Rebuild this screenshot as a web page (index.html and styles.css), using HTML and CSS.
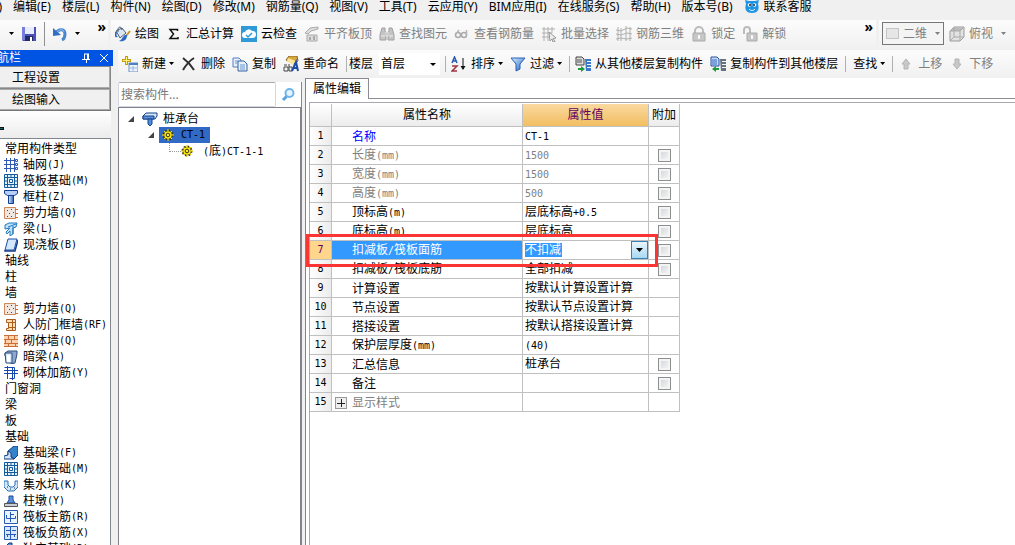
FILE: index.html
```html
<!DOCTYPE html>
<html lang="zh-CN">
<head>
<meta charset="utf-8">
<title>构件属性编辑</title>
<link rel="stylesheet" href="styles.css">
</head>
<body>
<svg class="sprite" aria-hidden="true">
  <defs>
    <linearGradient id="gBlue" x1="0" y1="0" x2="1" y2="1"><stop offset="0" stop-color="#d8ecff"/><stop offset="1" stop-color="#1f62c4"/></linearGradient>
    <linearGradient id="gDeep" x1="0" y1="0" x2="1" y2="0"><stop offset="0" stop-color="#d9ecfb"/><stop offset="1" stop-color="#2c64b8"/></linearGradient>
  </defs>
  <symbol id="save" viewBox="0 0 16 16"><path d="M1 1h14v14H2l-1-1z" fill="#4a50b8"/><path d="M4 1h9v7H4z" fill="#e8ecfa"/><path d="M1 1h3v13H1z" fill="#7780d8"/><path d="M4 10h8v5H4z" fill="#222a68"/><path d="M9 11h2v4H9z" fill="#fff"/></symbol>
  <symbol id="undo" viewBox="0 0 16 16"><path d="M4 7c3-5 9-4 9 1 0 3-1 5-3 6" fill="none" stroke="#4a86d0" stroke-width="3"/><path d="M1 2l0 8 8-1z" fill="#2f6fc4"/><path d="M5 6c3-3 6-3 7 0" fill="none" stroke="#9cc4ee"/></symbol>
  <symbol id="paint" viewBox="0 0 16 16"><path d="M1 5l6-3 4 5-6 5z" fill="#dbe6f2" stroke="#4a6078"/><path d="M3 6C2 1 6-1 7 4" fill="none" stroke="#3d5570"/><path d="M1 6c-1 3 0 5 1 4" fill="none" stroke="#2468c0" stroke-width="2"/><path d="M15 5l-4 5" stroke="#c8942c" stroke-width="2"/><path d="M12 9c0 5-3 7-8 6 3-1 3-4 6-6z" fill="#2868c8"/></symbol>
  <symbol id="sigma" viewBox="0 0 16 16"><path d="M11.500 5V3.500H4L7.500 8 4 12.500h8V11" fill="none" stroke="#111" stroke-width="1.500"/></symbol>
  <symbol id="cloud" viewBox="0 0 16 16"><path d="M0 0h16v16H0z" fill="#2e9bd8"/><path d="M4 12a3 3 0 010-6 4 4 0 017-1 3 3 0 011 7z" fill="#fff"/><path d="M5 9l2 2 4-4" fill="none" stroke="#2e9bd8" stroke-width="1.5"/></symbol>
  <symbol id="align" viewBox="0 0 16 16"><path d="M1 7l5-5 8-1v2l-7 2-3 3zM3 9h10v6H3z" fill="#ddd" stroke="#aaa"/><path d="M5 11h2v3H5zM9 10h2v4H9z" fill="#aaa"/></symbol>
  <symbol id="binoc" viewBox="0 0 16 16"><path d="M3 2h3v3l1 2v7H1V9zM10 2h3l2 7v5H9V7l1-2z" fill="#c4c4c4" stroke="#a0a0a0"/><path d="M7 6h2v4H7zM2 10h4M10 10h4" fill="#aaa" stroke="#eee"/></symbol>
  <symbol id="glasses" viewBox="0 0 16 16"><circle cx="4" cy="9" r="2.500" fill="none" stroke="#aaa" stroke-width="1.500"/><circle cx="10" cy="9" r="2.500" fill="none" stroke="#aaa" stroke-width="1.500"/><path d="M2 8l3-4M12.500 9V4" stroke="#b5b5b5" stroke-width="1.500" fill="none"/></symbol>
  <symbol id="batch" viewBox="0 0 16 16"><path d="M1 3h13M1 7h10M1 11h8M3 1v14M7 1v14M11 1v6" stroke="#b0b0b0" fill="none"/><path d="M8 6l7 6-3 .5 2 3-2 .5-1-3-2 2z" fill="#eee" stroke="#999"/></symbol>
  <symbol id="rebar3d" viewBox="0 0 16 16"><path d="M0 4l5 1 6-3 5 1M0 8l5 1 6-2 5 1M0 13l5-1 6 1 5-1M2 1v14M5 2v13M10 0v15M14 1v14" stroke="#b0b0b0" fill="none"/></symbol>
  <symbol id="lock" viewBox="0 0 16 16"><path d="M4 8V5a4 4 0 018 0v3" fill="none" stroke="#bbb" stroke-width="2"/><path d="M2 7h12v8H2z" fill="#c6c6c6" stroke="#aaa"/><path d="M8 9v4M7 11h2" stroke="#fff" stroke-width="1.5"/></symbol>
  <symbol id="unlock" viewBox="0 0 16 16"><path d="M2 8V4a3 3 0 016 0v4" fill="none" stroke="#bbb" stroke-width="2"/><path d="M5 7h10v8H5z" fill="#c6c6c6" stroke="#aaa"/><path d="M10 9v4M9 11h2" stroke="#fff" stroke-width="1.5"/></symbol>
  <symbol id="cube" viewBox="0 0 16 16"><path d="M1 5l4-4h10v10l-4 4H1z" fill="#e2e2e2" stroke="#999"/><path d="M1 5l4-4h10l-4 4z" fill="#bbb"/><path d="M1 5h10v10M11 5l4-4M5 1v10h10M1 15l4-4" fill="none" stroke="#aaa"/></symbol>
  <symbol id="new" viewBox="0 0 16 16"><path d="M7 7h9v9H7z" fill="#edf3fb" stroke="#6a8fc0"/><path d="M7 7h9v2H7z" fill="#4f80c4"/><path d="M8 12h7M11 10v5" stroke="#9ab4d8"/><path d="M3 0h3v3h3v3H6v3H3V6H0V3h3z" fill="#c79a10"/><path d="M4 1h1v7H4zM1 4h7v1H1z" fill="#fff27a"/></symbol>
  <symbol id="del" viewBox="0 0 16 16"><path d="M2 2c4 3 8 7 11 12M13 2C8 5 5 9 2 14" fill="none" stroke="#303030" stroke-width="2"/></symbol>
  <symbol id="copy" viewBox="0 0 16 16"><path d="M1 2h6l2 2v7H1z" fill="#e6effb" stroke="#5680be"/><path d="M6 5h6l3 3v7H6z" fill="#e6effb" stroke="#34649f"/><path d="M3 5h3M3 7h3M8 9h5M8 11h5M8 13h5" stroke="#6f98d2"/></symbol>
  <symbol id="rename" viewBox="0 0 16 16"><path d="M3 4l3-4h8l1 5-4 3z" fill="#d8a83c" stroke="#86682a"/><path d="M5 2l8 3-3 4-6-4z" fill="#fbe49a"/><path d="M1 11h4v4H1zM1 9h3M6 8v7h3v-4H6" fill="none" stroke="#444"/><path d="M9 15l4-9 2 9M11 12h4" fill="none" stroke="#1c4ea8" stroke-width="2"/></symbol>
  <symbol id="sort" viewBox="0 0 16 16"><path d="M1 7l2.500-6L6 7M2 5h3" fill="none" stroke="#2a5ab0" stroke-width="1.500"/><path d="M1 10h5l-5 5h5" fill="none" stroke="#a03440" stroke-width="1.500"/><path d="M12 2v11" stroke="#111"/><path d="M9.500 10h5L12 14z" fill="#111"/></symbol>
  <symbol id="filter" viewBox="0 0 16 16"><path d="M1 2h14l-5 6v5l-4 2V8z" fill="url(#gBlue)" stroke="#2860b8"/></symbol>
  <symbol id="fromFloor" viewBox="0 0 16 16"><path d="M1 1h6l2 2v6H1z" fill="#ddd" stroke="#444"/><path d="M2 4h5M2 6h5" stroke="#555"/><path d="M3 12h3v-2l4 3-4 3v-2H3z" fill="#1c9a3c"/><path d="M10 3h6v2h-4v1h4v2h-4v1h4v2h-4v1h4v3h-5z" fill="#3a78c8"/></symbol>
  <symbol id="toFloor" viewBox="0 0 16 16"><path d="M1 1h6l2 2v7H1z" fill="#c6dcfa" stroke="#234fa4"/><path d="M2 4h5M2 6h5M2 8h5" stroke="#3564b8"/><path d="M9 12H6v-2l-4 3 4 3v-2h3z" fill="#1c9a3c"/><path d="M10 3h6v2h-4v1h4v2h-4v1h4v2h-4v1h4v3h-5z" fill="#657080"/></symbol>
  <symbol id="up" viewBox="0 0 16 16"><path d="M8 3l4 5h-2v5H6V8H4z" fill="#c8c8c8" stroke="#b4b4b4"/></symbol>
  <symbol id="down" viewBox="0 0 16 16"><path d="M8 13l4-5h-2V3H6v5H4z" fill="#c8c8c8" stroke="#b4b4b4"/></symbol>
  <symbol id="service" viewBox="0 0 16 16"><path d="M1 2l4 1h6l4-1-1 4c2 6-1 9-6 9S0 12 2 6z" fill="#1e96e4"/><circle cx="5.500" cy="7" r="1.800" fill="#fff"/><circle cx="10.500" cy="7" r="1.800" fill="#fff"/><circle cx="6" cy="7" r="1" fill="#123"/><circle cx="10" cy="7" r="1" fill="#123"/><path d="M5 11c2 2 4 2 6 0" stroke="#fff" fill="none"/></symbol>
  <symbol id="search" viewBox="0 0 16 16"><circle cx="9.500" cy="6" r="4" fill="#e8f4fd" stroke="#6cb6ec" stroke-width="2"/><path d="M6.500 9.500L3 13" stroke="#5aa2e0" stroke-width="3"/></symbol>
  <symbol id="pin" viewBox="0 0 10 10"><path d="M3 1h5M3.500 1v5M6.500 1v5M7.500 1v5M1 6.500h8M5.500 7v3" stroke="#fff" fill="none"/></symbol>
  <symbol id="close" viewBox="0 0 10 10"><path d="M1 1l8 8M9 1L1 9" stroke="#fff" fill="none"/></symbol>
  <symbol id="expand" viewBox="0 0 8 8"><path d="M7 1v6H1z" fill="#444"/></symbol>
  <symbol id="gear" viewBox="0 0 12 12"><circle cx="6" cy="6" r="4.500" fill="none" stroke="#3a3400" stroke-width="2" stroke-dasharray="1.800 1.700"/><circle cx="6" cy="6" r="4" fill="#ffe81c" stroke="#6e6400" stroke-width="0.800"/><path d="M6 0v12M0 6h12M2 2l8 8M10 2l-8 8" stroke="#f5e100"/><circle cx="6" cy="6" r="1.800" fill="#ffe81c" stroke="#333"/></symbol>
  <symbol id="cap" viewBox="0 0 16 14"><path d="M1 4l3-3h11v3l-2 3H1z" fill="#d4e8fa" stroke="#16408c"/><path d="M1 4h11v3H1z" fill="#5a94dc" stroke="#16408c"/><path d="M6 7h4v5l-2 2-2-2z" fill="#4c90dc" stroke="#16408c"/></symbol>
  <symbol id="grid" viewBox="0 0 14 14"><path d="M2.500 0v14M6.500 0v14M10.500 0v14M0 2.500h12M0 6.500h12M0 10.500h12" stroke="#3058b4"/><path d="M11.500 1.500h2v2h-2zM11.500 5.500h2v2h-2zM11.500 9.500h2v2h-2z" fill="#fff" stroke="#3058b4"/></symbol>
  <symbol id="raft" viewBox="0 0 14 14"><path d="M.5.5h13v13H.5z" fill="#e2f2ff" stroke="#155b9c"/><path d="M0 3.500h14M0 10.500h14M3.500 0v14M10.500 0v14" stroke="#155b9c"/><path d="M5.500 5.500h3v3h-3z" fill="#fff" stroke="#155b9c"/><path d="M7 1v2M7 11v2M1 7h2M11 7h2" stroke="#155b9c"/></symbol>
  <symbol id="column" viewBox="0 0 14 14"><path d="M.5.500h13v3l-3 2h-7l-3-2z" fill="#b4d0f8" stroke="#143c94"/><path d="M4.500 5.500h5v8h-5z" fill="url(#gDeep)" stroke="#143c94"/></symbol>
  <symbol id="wall" viewBox="0 0 14 14"><path d="M.5 1.500h11v11H.5z" fill="#eee6df" stroke="#d08858"/><path d="M3 4.500h1M7 3.500h1M5 7.500h1M9 6.500h1M3 10.500h1M7 10.500h1" stroke="#4c4c4c"/><path d="M11 3.500h3M11 7.500h3M11 11.500h3" stroke="#d86c1c"/></symbol>
  <symbol id="beam" viewBox="0 0 14 14"><path d="M1 3l4-2h8l-1 4-3 1v6l-3 2V9L3 12l-1-2 4-4-5 1z" fill="#bfe2fb" stroke="#2579bd"/><path d="M4 5l8-3M9 4v8" stroke="#2579bd"/></symbol>
  <symbol id="slab" viewBox="0 0 14 14"><path d="M4 1h9l-3 11H1z" fill="#d2e7fc" stroke="#1c4ea4"/><path d="M1 12v1h10l3-11" fill="none" stroke="#123c88" stroke-width="1.500"/></symbol>
  <symbol id="defwall" viewBox="0 0 14 14"><path d="M2.500 1.500h9v11h-9v-2h2v-6h-2z" fill="#fae1b8" stroke="#ad5c1c"/><path d="M8.500 2v10M5 4.500h6M5 9.500h6" stroke="#ad5c1c"/></symbol>
  <symbol id="brick" viewBox="0 0 14 14"><path d="M0 1h14v12H0z" fill="#fbd3ac"/><path d="M0 1.500h14M0 5.500h14M0 9.500h14M0 12.500h14M4.500 1v4M10.500 1v4M7.500 5v4M1.500 5v4M4.500 9v4M11.500 9v4" stroke="#cc6c38"/></symbol>
  <symbol id="hidbeam" viewBox="0 0 14 14"><path d="M1 3l3-2h9v3l-2 9-4 1V6H1z" fill="#8da8cc" stroke="#2c4c7c"/><path d="M1 3h7v10H2z" fill="#d9e6f6" stroke="#2c4c7c"/><path d="M3 5h3v7H3z" fill="#fff"/></symbol>
  <symbol id="reinf" viewBox="0 0 14 14"><path d="M0 4.500h14M0 7.500h14M3.500 0v13M8.500 2v12M.5 1.500h10v8M5.500 12.500h5v-5" stroke="#1648b0" fill="none"/></symbol>
  <symbol id="fbeam" viewBox="0 0 14 14"><path d="M4 9V5l6-5h4v9l-4 4z" fill="#3484cc" stroke="#123c7c"/><path d="M0 13v-3l4-1V5l3 2v4l3 2z" fill="#cfe6fa" stroke="#123c7c"/></symbol>
  <symbol id="pit" viewBox="0 0 14 14"><path d="M0 3h4v4l2 2h3l2-2V3h3v6l-4 4H4L0 9z" fill="#d0e8fa" stroke="#2a70b8"/><path d="M3 9h1M6 11h1M10 10h1" stroke="#234"/></symbol>
  <symbol id="pier" viewBox="0 0 14 14"><path d="M5 2h4v4l2 3H3l2-3z" fill="#5c90dc" stroke="#1c489c"/><path d="M.5 9.500h13v3H.5z" fill="#c8ccd4" stroke="#555"/></symbol>
  <symbol id="mainbar" viewBox="0 0 14 14"><path d="M.5.500h13v13H.5z" fill="#eaf4ff" stroke="#2858b4"/><path d="M2.500 5v3.500h9V6M6.500 2v10M6 4.500h4" stroke="#2858b4" fill="none"/></symbol>
  <symbol id="negbar" viewBox="0 0 14 14"><path d="M.5.500h13v13H.5z" fill="#d6e8fc" stroke="#2858b4"/><path d="M2 4.500h4M8 4.500h4M2 8.500h10M6.500 1v12M3.500 8v3M10.500 8v3" stroke="#2858b4" fill="none"/></symbol>
  <symbol id="isobase" viewBox="0 0 14 14"><path d="M1 5l4-4h3v4l5 2v7H1z" fill="#4e94d4" stroke="#123c7c"/><path d="M4 3v11M9 6v8" stroke="#123c7c"/></symbol>
</svg>

<nav class="menubar">
  <a href="#" class="cut-item">工程(F)</a>
  <a href="#">编辑(E)</a><a href="#">楼层(L)</a><a href="#">构件(N)</a><a href="#">绘图(D)</a><a href="#">修改(M)</a><a href="#">钢筋量(Q)</a><a href="#">视图(V)</a><a href="#">工具(T)</a><a href="#">云应用(Y)</a><a href="#">BIM应用(I)</a><a href="#">在线服务(S)</a><a href="#">帮助(H)</a><a href="#">版本号(B)</a>
  <a href="#" class="service"><svg class="icon"><use href="#service"/></svg>联系客服</a>
</nav>

<div class="toolbars">
  <div class="toolbar quick">
    <span class="caret"></span>
    <button class="tool" aria-label="保存"><svg class="icon"><use href="#save"/></svg></button>
    <span class="divider"></span>
    <button class="tool" aria-label="撤销"><svg class="icon"><use href="#undo"/></svg></button>
    <span class="caret"></span>
    <button class="more">»</button>
  </div>
  <div class="toolbar main-tools">
    <button class="tool"><svg class="icon"><use href="#paint"/></svg>绘图</button>
    <button class="tool"><svg class="icon"><use href="#sigma"/></svg>汇总计算</button>
    <button class="tool"><svg class="icon"><use href="#cloud"/></svg>云检查</button>
    <button class="tool" disabled><svg class="icon"><use href="#align"/></svg>平齐板顶</button>
    <button class="tool" disabled><svg class="icon"><use href="#binoc"/></svg>查找图元</button>
    <button class="tool" disabled><svg class="icon"><use href="#glasses"/></svg>查看钢筋量</button>
    <button class="tool" disabled><svg class="icon"><use href="#batch"/></svg>批量选择</button>
    <button class="tool" disabled><svg class="icon"><use href="#rebar3d"/></svg>钢筋三维</button>
    <button class="tool" disabled><svg class="icon"><use href="#lock"/></svg>锁定</button>
    <button class="tool" disabled><svg class="icon"><use href="#unlock"/></svg>解锁</button>
    <button class="more">»</button>
  </div>
  <div class="toolbar view-tools">
    <button class="tool mode" disabled><span class="swatch"></span>二维<span class="caret"></span></button>
    <button class="tool look" disabled><svg class="icon"><use href="#cube"/></svg>俯视<span class="caret"></span></button>
  </div>
</div>

<div class="workspace">
  <aside class="nav-panel">
    <header class="nav-title"><span class="nav-name">模块导航栏</span><button aria-label="固定"><svg><use href="#pin"/></svg></button><button aria-label="关闭"><svg><use href="#close"/></svg></button></header>
    <button class="nav-tab">工程设置</button>
    <button class="nav-tab active">绘图输入</button>
    <div class="nav-strip"><span></span></div>
    <ul class="types">
      <li class="group">常用构件类型</li>
      <li><svg><use href="#grid"/></svg>轴网<span class="hw">(J)</span></li>
      <li><svg><use href="#raft"/></svg>筏板基础<span class="hw">(M)</span></li>
      <li><svg><use href="#column"/></svg>框柱<span class="hw">(Z)</span></li>
      <li><svg><use href="#wall"/></svg>剪力墙<span class="hw">(Q)</span></li>
      <li><svg><use href="#beam"/></svg>梁<span class="hw">(L)</span></li>
      <li><svg><use href="#slab"/></svg>现浇板<span class="hw">(B)</span></li>
      <li class="group">轴线</li>
      <li class="group">柱</li>
      <li class="group">墙</li>
      <li><svg><use href="#wall"/></svg>剪力墙<span class="hw">(Q)</span></li>
      <li><svg><use href="#defwall"/></svg>人防门框墙<span class="hw">(RF)</span></li>
      <li><svg><use href="#brick"/></svg>砌体墙<span class="hw">(Q)</span></li>
      <li><svg><use href="#hidbeam"/></svg>暗梁<span class="hw">(A)</span></li>
      <li><svg><use href="#reinf"/></svg>砌体加筋<span class="hw">(Y)</span></li>
      <li class="group">门窗洞</li>
      <li class="group">梁</li>
      <li class="group">板</li>
      <li class="group">基础</li>
      <li><svg><use href="#fbeam"/></svg>基础梁<span class="hw">(F)</span></li>
      <li><svg><use href="#raft"/></svg>筏板基础<span class="hw">(M)</span></li>
      <li><svg><use href="#pit"/></svg>集水坑<span class="hw">(K)</span></li>
      <li><svg><use href="#pier"/></svg>柱墩<span class="hw">(Y)</span></li>
      <li><svg><use href="#mainbar"/></svg>筏板主筋<span class="hw">(R)</span></li>
      <li><svg><use href="#negbar"/></svg>筏板负筋<span class="hw">(X)</span></li>
      <li><svg><use href="#isobase"/></svg>独立基础<span class="hw">(D)</span></li>
    </ul>
  </aside>

  <main class="content">
    <div class="toolbar edit-tools">
      <button class="tool"><svg class="icon"><use href="#new"/></svg>新建<span class="caret"></span></button>
      <button class="tool"><svg class="icon"><use href="#del"/></svg>删除</button>
      <button class="tool"><svg class="icon"><use href="#copy"/></svg>复制</button>
      <button class="tool"><svg class="icon"><use href="#rename"/></svg>重命名</button>
      <span class="divider"></span>
      <label class="floor">楼层<select><option>首层</option></select></label>
      <span class="divider after-combo"></span>
      <button class="tool"><svg class="icon"><use href="#sort"/></svg>排序<span class="caret"></span></button>
      <button class="tool"><svg class="icon"><use href="#filter"/></svg>过滤<span class="caret"></span></button>
      <span class="divider"></span>
      <button class="tool"><svg class="icon"><use href="#fromFloor"/></svg>从其他楼层复制构件</button>
      <button class="tool"><svg class="icon"><use href="#toFloor"/></svg>复制构件到其他楼层</button>
      <span class="divider"></span>
      <button class="tool find">查找<span class="caret"></span></button>
      <span class="divider"></span>
      <button class="tool" disabled><svg class="icon"><use href="#up"/></svg>上移</button>
      <button class="tool" disabled><svg class="icon"><use href="#down"/></svg>下移</button>
    </div>

    <div class="panes">
      <section class="component-pane">
        <div class="search"><input type="text" placeholder="搜索构件..." aria-label="搜索构件"><button aria-label="搜索"><svg class="icon"><use href="#search"/></svg></button></div>
        <ul class="tree">
          <li class="level-one"><svg class="arrow"><use href="#expand"/></svg><svg class="cap"><use href="#cap"/></svg>桩承台</li>
          <li class="level-two"><svg class="arrow"><use href="#expand"/></svg><span class="selected"><svg class="gear"><use href="#gear"/></svg><span class="hw">CT-1</span></span></li>
          <li class="level-three"><span class="branch"></span><svg class="gear"><use href="#gear"/></svg><span><span class="hw">(</span>底<span class="hw">)CT-1-1</span></span></li>
        </ul>
      </section>

      <section class="property-pane">
        <div class="tabs"><button class="tab">属性编辑</button></div>
        <div class="sheet">
          <table class="props">
            <colgroup><col class="c-num"><col class="c-name"><col class="c-value"><col class="c-extra"></colgroup>
            <thead><tr><th></th><th>属性名称</th><th class="hot">属性值</th><th>附加</th></tr></thead>
            <tbody>
              <tr class="key"><th>1</th><td>名称</td><td><span class="hw">CT-1</span></td><td></td></tr>
              <tr class="dim"><th>2</th><td>长度<span class="hw">(mm)</span></td><td><span class="hw">1500</span></td><td><input type="checkbox" aria-label="长度附加"></td></tr>
              <tr class="dim"><th>3</th><td>宽度<span class="hw">(mm)</span></td><td><span class="hw">1500</span></td><td><input type="checkbox" aria-label="宽度附加"></td></tr>
              <tr class="dim"><th>4</th><td>高度<span class="hw">(mm)</span></td><td><span class="hw">500</span></td><td><input type="checkbox" aria-label="高度附加"></td></tr>
              <tr><th>5</th><td>顶标高<span class="hw">(m)</span></td><td>层底标高<span class="hw">+0.5</span></td><td><input type="checkbox" aria-label="顶标高附加"></td></tr>
              <tr><th>6</th><td>底标高<span class="hw">(m)</span></td><td>层底标高</td><td><input type="checkbox" aria-label="底标高附加"></td></tr>
              <tr class="current"><th>7<span class="marker"></span></th><td>扣减板<span class="hw">/</span>筏板面筋</td><td><div class="editor"><mark>不扣减</mark><button aria-label="选择"><span class="caret"></span></button></div></td><td><input type="checkbox" aria-label="面筋附加"></td></tr>
              <tr><th>8</th><td>扣减板<span class="hw">/</span>筏板底筋</td><td>全部扣减</td><td><input type="checkbox" aria-label="底筋附加"></td></tr>
              <tr><th>9</th><td>计算设置</td><td>按默认计算设置计算</td><td></td></tr>
              <tr><th>10</th><td>节点设置</td><td>按默认节点设置计算</td><td></td></tr>
              <tr><th>11</th><td>搭接设置</td><td>按默认搭接设置计算</td><td></td></tr>
              <tr><th>12</th><td>保护层厚度<span class="hw">(mm)</span></td><td><span class="hw">(40)</span></td><td></td></tr>
              <tr><th>13</th><td>汇总信息</td><td>桩承台</td><td><input type="checkbox" aria-label="汇总信息附加"></td></tr>
              <tr><th>14</th><td>备注</td><td></td><td><input type="checkbox" aria-label="备注附加"></td></tr>
              <tr class="dim folded"><th>15</th><td><button class="plus" aria-label="展开"></button>显示样式</td><td></td><td></td></tr>
            </tbody>
          </table>
        </div>
      </section>
    </div>
  </main>
</div>
</body>
</html>
```
FILE: styles.css
```css
* { box-sizing: border-box; }
body {
  margin: 0;
  height: 100vh;
  display: flex;
  flex-direction: column;
  overflow: hidden;
  background: #f0f0f0;
  color: #000;
  font: 12px/16px "Noto Sans", "Noto Sans CJK SC", sans-serif;
}
button, input, select { font: inherit; color: inherit; margin: 0; padding: 0; border: 0; background: none; }
ul { list-style: none; margin: 0; padding: 0; }
a { color: inherit; text-decoration: none; }
svg { flex: none; display: block; }
.sprite { position: absolute; width: 0; height: 0; }
.icon { width: 16px; height: 16px; }
.hw { font: 10px/16px "DejaVu Sans Mono", monospace; }
.caret {
  flex: none;
  width: 5px;
  height: 3px;
  background: currentColor;
  clip-path: polygon(0 0, 100% 0, 50% 100%);
}

/* Menu */
.menubar { flex: none; height: 20px; display: flex; gap: 11px; line-height: 14px; white-space: nowrap; }
.cut-item { width: 2px; display: flex; justify-content: flex-end; }
.service { display: flex; gap: 4px; }
.service .icon { margin-top: -2px; }

/* Toolbars */
.toolbars { flex: none; display: flex; gap: 3px; height: 30px; }
.toolbar {
  display: flex;
  align-items: center;
  gap: 7px;
  padding-left: 4px;
  white-space: nowrap;
  background: linear-gradient(#fcfcfc, #f0f0f0);
}
.toolbars .toolbar { padding-bottom: 3px; }
.tool { display: flex; align-items: center; gap: 4px; flex: none; }
.tool:disabled { color: #808080; }
.divider { flex: none; width: 1px; height: 16px; background: #b0b0b0; }
.more { margin-left: auto; align-self: flex-start; font-weight: bold; font-size: 14px; line-height: 14px; }
.quick { width: 108px; padding-left: 9px; padding-right: 2px; }
.quick .divider { height: 24px; background: #909090; }
.main-tools { flex: 1; padding-right: 3px; }
.view-tools { width: 136px; gap: 5px; padding-left: 3px; }
.mode { height: 23px; width: 62px; border: 1px solid #777; padding: 0 3px; background: #f4f4f4; }
.mode .caret, .look .caret { margin-left: 4px; }
.swatch { width: 14px; height: 11px; border: 1px solid #c4c4c4; background: #e6e6e6; }

/* Workspace */
.workspace { flex: 1; min-height: 0; display: flex; gap: 5px; }
.nav-panel { flex: none; width: 113px; display: flex; flex-direction: column; overflow: hidden; }
.nav-title { flex: none; height: 16px; display: flex; align-items: center; gap: 8px; padding-right: 4px; background: #0054e3; color: #fff; }
.nav-name { width: 21px; margin-right: auto; display: flex; justify-content: flex-end; white-space: nowrap; }
.nav-title svg { width: 10px; height: 10px; }
.nav-tab { flex: none; height: 23px; margin-right: 2px; padding-left: 12px; text-align: left; border: solid #888; border-width: 1px 1px 1px 0; background: #f0f0f0; box-shadow: inset -1px -1px #aaa; }
.nav-tab.active { height: 22px; border-color: #aaa #777 #777; }
.nav-strip { flex: none; height: 27px; margin-right: 2px; padding-top: 16px; background: linear-gradient(#fff, #ececec); }
.nav-strip span { display: block; width: 4px; height: 3px; background: #0a6464; border: solid #111; border-width: 1px 1px 1px 0; }
.types { flex: 1; min-height: 0; overflow: hidden; margin-right: 2px; border: solid #82878f; border-width: 1px 1px 0 0; background: #fff; padding-top: 2px; white-space: nowrap; }
.types li { height: 16px; display: flex; align-items: center; padding-left: 4px; }
.types li svg { width: 14px; height: 14px; margin-right: 5px; }
.types .group { padding-left: 5px; }

.content { flex: 1; min-width: 0; display: flex; flex-direction: column; background: #fff; }
.edit-tools { flex: none; height: 28px; padding-bottom: 1px; }
.edit-tools .divider + .tool { margin-left: -2px; }
.edit-tools .divider + .find { margin-left: 0; }
.edit-tools .caret { margin-left: -1px; }
.floor { position: relative; display: flex; align-items: center; gap: 6px; margin-left: -5px; }
.floor select {
  appearance: none;
  width: 61px;
  height: 22px;
  padding-left: 2px;
  border-radius: 0;
  background: #fff;
}
.floor::after { content: ""; position: absolute; right: 4px; top: 10px; border: 3px solid transparent; border-top-color: #000; border-bottom: 0; pointer-events: none; }
.after-combo { margin-left: -2px; }

.panes { flex: 1; min-height: 0; display: flex; gap: 3px; background: #f0f0f0; }
.component-pane { flex: none; width: 184px; display: flex; flex-direction: column; padding-top: 4px; }
.search { flex: none; height: 25px; display: flex; align-items: center; gap: 4px; background: #fff; border-right: 1px solid #82878f; }
.search input { width: 158px; height: 25px; padding: 0 2px; border: 1px solid #d4d6e4; border-top-color: #aaa; border-radius: 2px; background: #fff; }
.search input::placeholder { color: #777; opacity: 1; }
.tree { flex: 1; padding-top: 3px; background: #fff; border: solid #82828c; border-width: 1px 2px 0 1px; }
.tree li { height: 16px; display: flex; align-items: center; }
.arrow { width: 8px; height: 8px; }
.cap { width: 16px; height: 14px; margin: 0 5px 0 7px; }
.gear { width: 12px; height: 12px; }
.level-one { padding-left: 8px; }
.level-two { padding-left: 28px; gap: 4px; }
.selected { display: flex; align-items: center; gap: 7px; height: 16px; width: 51px; padding-left: 3px; background: #316ac5; }
.level-three { padding-left: 50px; }
.branch { width: 12px; height: 9px; align-self: flex-start; border: dotted #999; border-width: 0 0 1px 1px; }
.level-three .gear { margin-right: 10px; }

.property-pane { flex: 1; min-width: 0; display: flex; flex-direction: column; background: #fff; border-left: 1px solid #82828c; }
.tabs { flex: none; height: 21px; display: flex; }
.tabs::after { content: ""; flex: 1; border-bottom: 1px solid #8c8c98; }
.tab { width: 63px; border: solid #8c8c98; border-width: 1px 1px 0 0; }
.sheet { flex: 1; margin: 3px 0 0 3px; padding-top: 1px; border: solid #a8a8b0; border-width: 1px 0 0 1px; }
.props { table-layout: fixed; width: 370px; border-spacing: 0; }
.c-num { width: 22px; }
.c-name { width: 191px; }
.c-value { width: 126px; }
.c-extra { width: 31px; }
.props th, .props td { height: 19px; padding: 0; border: solid #c0c0c0; border-width: 0 1px 1px 0; font-weight: normal; line-height: 16px; white-space: nowrap; }
.props thead th { height: 23px; background: linear-gradient(#fff, #ececec); }
.props thead .hot { background: linear-gradient(#fad9a0, #f2be60); color: #600060; }
.props tbody th { position: relative; background: linear-gradient(90deg, #fff, #ececec); font: 10px/16px "DejaVu Sans Mono", monospace; }
.props td:nth-child(2) { padding: 1px 0 0 20px; }
.props td:nth-child(3) { padding-left: 2px; }
.props td:nth-child(4) { text-align: center; }
.key td:nth-child(2) { color: #00f; }
.dim td { color: #808080; }
.props input { appearance: none; display: block; width: 13px; height: 13px; margin: 0 auto; border: 1px solid #8e8f8f; background: linear-gradient(135deg, #cfd3d8, #f8f8f8); box-shadow: inset 0 0 0 2px #f4f4f4; }
.props .current th { background: #ffd68c; color: #600060; }
.props .current td:nth-child(2) { background: #39f; color: #fff; }
.editor { display: flex; align-items: center; justify-content: space-between; height: 18px; }
.editor mark { background: #39f; color: #fff; line-height: 14px; height: 14px; border-right: 1px solid #d07830; }
.editor button { display: flex; align-items: center; justify-content: center; width: 17px; height: 18px; border: 1px solid #3c7fb1; background: linear-gradient(#e8f6fd, #a8d9f3); }
.editor .caret { width: 7px; height: 4px; }
.marker { position: absolute; z-index: 1; left: -4px; top: -7px; width: 352px; height: 33px; border: 3px solid #fb3434; pointer-events: none; }
.props .folded td:nth-child(2) { padding-left: 3px; }
.plus {
  display: inline-block;
  vertical-align: middle;
  width: 12px;
  height: 12px;
  margin-right: 5px;
  border: 1px solid #999;
  background: linear-gradient(#222, #222) center / 8px 1px no-repeat, linear-gradient(#222, #222) center / 1px 8px no-repeat, #eee;
}
```
